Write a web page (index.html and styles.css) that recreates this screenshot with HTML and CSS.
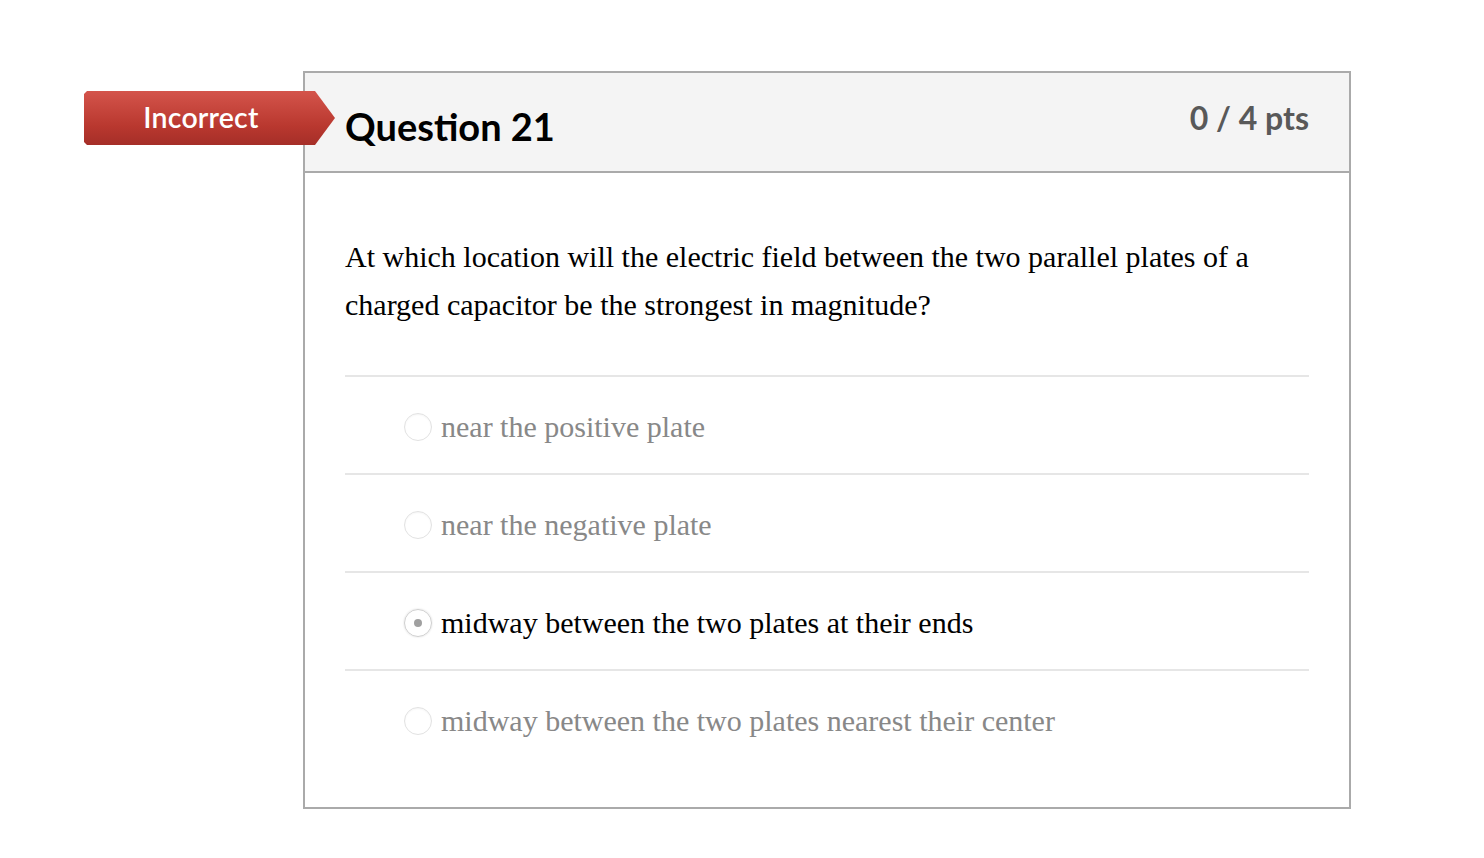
FILE: index.html
```html
<!DOCTYPE html>
<html>
<head>
<meta charset="utf-8">
<link rel="stylesheet" href="styles.css">
</head>
<body>
<div class="page">
  <div class="card">
    <div class="badge"><span>Incorrect</span></div>
    <div class="card-header">
      <h2 class="title">Question 21</h2>
      <div class="pts">0 / 4 pts</div>
    </div>
    <div class="card-body">
      <p class="question">At which location will the electric field between the two parallel plates of a charged capacitor be the strongest in magnitude?</p>
      <div class="answers">
        <div class="answer"><span class="radio"></span><span class="label muted">near the positive plate</span></div>
        <div class="answer"><span class="radio"></span><span class="label muted">near the negative plate</span></div>
        <div class="answer"><span class="radio checked"></span><span class="label">midway between the two plates at their ends</span></div>
        <div class="answer"><span class="radio"></span><span class="label muted">midway between the two plates nearest their center</span></div>
      </div>
    </div>
  </div>
</div>
</body>
</html>
```
FILE: styles.css
```css
html, body {
  margin: 0;
  padding: 0;
  background: #fff;
}
.page {
  padding: 71px 0 0 303px;
}
.card {
  position: relative;
  width: 1044px;
  border: 2px solid #aaaaaa;
  box-sizing: content-box;
}
.badge {
  position: absolute;
  left: -221px;
  top: 18px;
  width: 251px;
  height: 54px;
  background: linear-gradient(#d4544b, #b9382f 65%, #a52e28);
  clip-path: polygon(0 3px, 3px 0, 231px 0, 251px 27px, 231px 54px, 3px 54px, 0 51px);
  display: flex;
  align-items: center;
}
.badge span {
  width: 234px;
  text-align: center;
  color: #fff;
  font-family: Lato, sans-serif;
  font-size: 28.5px;
  font-weight: 600;
  letter-spacing: 0.2px;
  margin-top: -2px;
}
.card-header {
  background: #f4f4f4;
  border-bottom: 2px solid #aaaaaa;
  height: 98px;
  display: flex;
  justify-content: space-between;
  padding: 0 40px;
}
.title {
  margin: 0;
  padding-top: 29px;
  font-family: Lato, sans-serif;
  font-weight: 700;
  font-size: 38px;
  color: #000;
  line-height: 48px;
}
.pts {
  padding-top: 25px;
  font-family: Lato, sans-serif;
  font-weight: 700;
  font-size: 32px;
  color: #595959;
  line-height: 40px;
}
.card-body {
  padding: 60px 40px 40px;
}
.question {
  margin: 0 0 46px;
  font-family: "Liberation Serif", serif;
  font-size: 30px;
  line-height: 48px;
  color: #000;
}
.answer {
  border-top: 2px solid #e6e6e6;
  box-sizing: border-box;
  height: 98px;
  display: flex;
  align-items: center;
  padding-left: 59px;
  padding-top: 4px;
  gap: 9px;
}
.radio {
  width: 26px;
  height: 26px;
  border-radius: 50%;
  border: 1px solid #e2e2e2;
  box-shadow: inset 0 1px 2px rgba(0,0,0,0.04);
  display: flex;
  align-items: center;
  justify-content: center;
  flex: none;
}
.radio.checked {
  border-color: #cfcfcf;
  box-shadow: 0 0 2px rgba(0,0,0,0.15);
}
.radio.checked::after {
  content: "";
  width: 8px;
  height: 8px;
  border-radius: 50%;
  background: #a0a0a0;
}
.label {
  font-family: "Liberation Serif", serif;
  font-size: 30px;
  color: #000;
  line-height: 40px;
}
.label.muted {
  color: #888;
}
```
